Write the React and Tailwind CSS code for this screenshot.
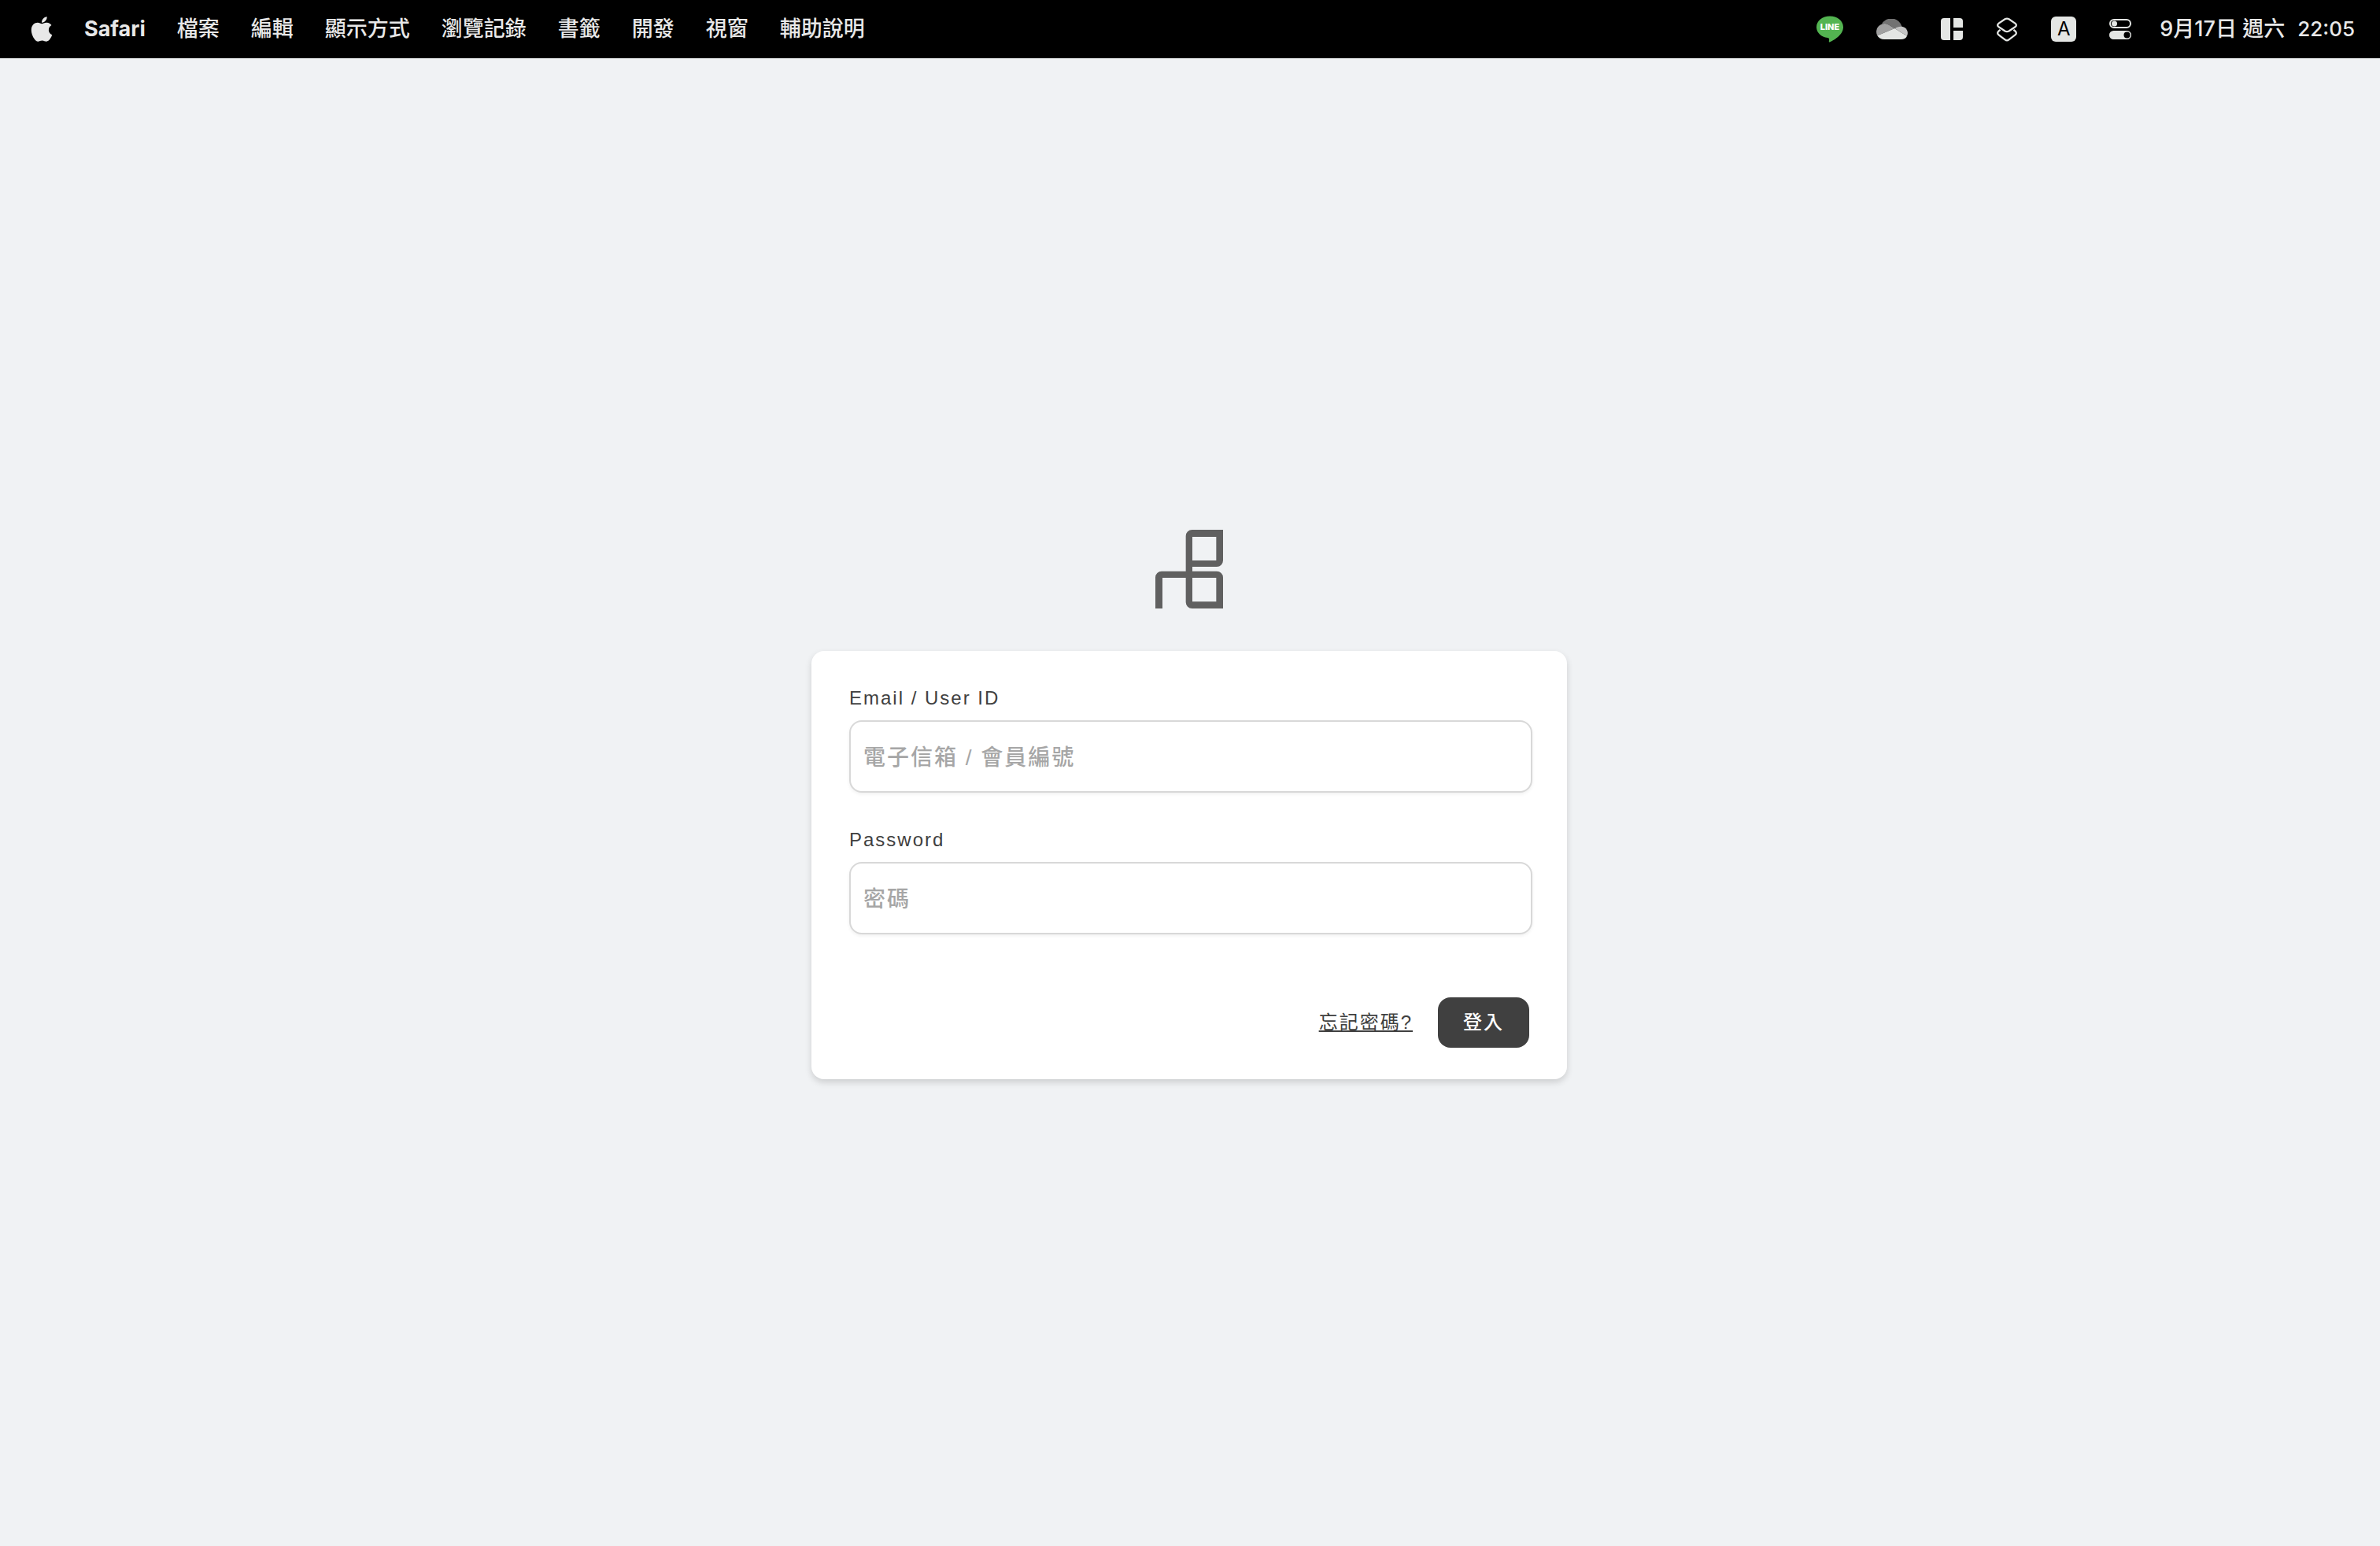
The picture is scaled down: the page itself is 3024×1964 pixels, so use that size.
import React from "react";
import { FaApple } from "react-icons/fa";

const menus = ["檔案", "編輯", "顯示方式", "瀏覽記錄", "書籤", "開發", "視窗", "輔助說明"];

function LineIcon() {
  return (
    <svg width="34" height="34" viewBox="1 0 34 34" role="img" aria-label="LINE">
      <path
        fill="#53b451"
        d="M18 0.5C8.5 .5 1 6.7 1 14.400c0 6.900 6 12.700 14.200 13.700.9.200 1.800.6 1.900 1.500.1.900-.2 2.300-.3 3-.1.800.3 1.200 1.100.8C22.500 31.200 35 24.500 35 14.400 35 6.700 27.500.5 18 .5Z"
      />
      <text x="18" y="18" textAnchor="middle" fill="#fff" fontSize="11" fontWeight="800" fontFamily="Inter, sans-serif">
        LINE
      </text>
    </svg>
  );
}

function CloudIcon() {
  return (
    <svg width="40" height="26" viewBox="306 69 120 78" aria-hidden="true">
      <path fill="#727272" d="M326 90A42 42 0 0 1 404 99Q388 98 376 105L352 91Q340 84 326 90Z" />
      <path fill="#a0a0a0" d="M310 133A31 31 0 0 1 352 91L376 105Z" />
      <path fill="#c4c4c4" d="M376 105Q388 97 403 98A25 25 0 0 1 423 134Z" />
      <path fill="#e4e6e4" d="M310 133L376 105L423 134Q417 147 400 147H336Q318 147 310 133Z" />
    </svg>
  );
}

function PanesIcon() {
  return (
    <svg width="28" height="28" viewBox="0 0 28 28" fill="#e4e6e4" aria-hidden="true">
      <path d="M4 0H12V28H4A4 4 0 0 1 0 24V4A4 4 0 0 1 4 0Z" />
      <path d="M16 0H24A4 4 0 0 1 28 4V12H16Z" />
      <path d="M16 16H28V24A4 4 0 0 1 24 28H16Z" />
    </svg>
  );
}

function ShortcutsIcon() {
  return (
    <svg width="28" height="31" viewBox="770 66 85 94" fill="none" stroke="#e4e6e4" strokeWidth="7" strokeLinejoin="round" aria-hidden="true">
      <path d="M805 73Q812.500 69 820 73L844 89Q853 96 844 103L820 119Q812.500 123 805 119L781 103Q772 96 781 89Z" />
      <path d="M787 114L781 119Q772 127 781 134L805 152Q812.500 158 820 152L844 134Q853 127 844 119L838 114" />
    </svg>
  );
}

function ControlCenterIcon() {
  return (
    <svg width="28" height="26" viewBox="0 0 28 26" aria-hidden="true">
      <rect x="1" y="1" width="26" height="10" rx="5" fill="none" stroke="#e4e6e4" strokeWidth="2" />
      <circle cx="6.500" cy="6" r="3.500" fill="#e4e6e4" />
      <rect x="0" y="15" width="28" height="11" rx="5.500" fill="#e4e6e4" />
      <circle cx="22.500" cy="20.500" r="4" fill="#000" />
    </svg>
  );
}

function MenuBar() {
  return (
    <header className="flex h-[74px] shrink-0 items-center justify-between bg-black pr-8 pl-[39px] font-['Inter','Noto_Sans_CJK_TC',sans-serif] text-[27px] leading-9 font-medium text-[#e8e8e8]">
      <nav className="flex items-center gap-10" aria-label="選單列">
        <button type="button" aria-label="Apple">
          <FaApple className="h-9 w-7" />
        </button>
        <button type="button" className="font-bold">
          Safari
        </button>
        {menus.map((name) => (
          <button type="button" key={name}>
            {name}
          </button>
        ))}
      </nav>
      <div className="flex items-center gap-9">
        <div className="flex items-center gap-[42px]">
          <LineIcon />
          <CloudIcon />
          <PanesIcon />
          <ShortcutsIcon />
          <span className="flex size-8 items-center justify-center rounded-md bg-[#e4e6e4] text-2xl leading-8 font-normal text-black">A</span>
          <ControlCenterIcon />
        </div>
        <time className="flex gap-4">
          <span>9月17日 週六</span>
          <span className="text-[26px]">22:05</span>
        </time>
      </div>
    </header>
  );
}

function Logo() {
  return (
    <svg width="86" height="100" viewBox="84 69 258 300" role="img" aria-label="Logo">
      <path
        fill="#606060"
        fillRule="evenodd"
        d="M224 69H342V186A24 24 0 0 1 318 210H225V227H318A24 24 0 0 1 342 251V369H224A24 24 0 0 1 200 345V252H111V369H84V251A24 24 0 0 1 108 227H200V93A24 24 0 0 1 224 69ZM225 96V186H316V96ZM225 252V343H316V252Z"
      />
    </svg>
  );
}

function Field({ id, label, type, placeholder }) {
  return (
    <div className="-mr-1 flex flex-col gap-2.5">
      <label htmlFor={id} className="leading-9">
        {label}
      </label>
      <input
        id={id}
        type={type}
        placeholder={placeholder}
        className="h-[92px] w-full rounded-2xl border-2 border-[#d8d8d8] bg-white px-4 pt-1 text-[28px] font-medium tracking-[2px] shadow-[0_2px_4px_rgba(0,0,0,0.06)] placeholder:text-[#a6a6a6]"
      />
    </div>
  );
}

export default function App() {
  return (
    <div className="flex min-h-screen flex-col bg-[#f0f2f4]">
      <MenuBar />
      <main className="flex grow flex-col items-center justify-center gap-[54px] pt-1.5 pr-0.5 font-['Liberation_Sans','Noto_Sans_CJK_TC',sans-serif] text-2xl tracking-[2px] text-[#404040]">
        <Logo />
        <form className="flex w-full max-w-[960px] flex-col rounded-2xl bg-white px-12 pt-[42px] pb-10 shadow-[0_4px_8px_rgba(0,0,0,0.15)]">
          <div className="flex flex-col gap-[42px]">
            <Field id="user" label="Email / User ID" type="text" placeholder="電子信箱 / 會員編號" />
            <Field id="password" label="Password" type="password" placeholder="密碼" />
          </div>
          <div className="mt-20 flex items-center justify-end gap-8">
            <a href="#forgot" className="underline">
              忘記密碼?
            </a>
            <button type="button" className="h-16 rounded-2xl bg-[#404040] px-8 font-medium text-white">
              登入
            </button>
          </div>
        </form>
      </main>
    </div>
  );
}
